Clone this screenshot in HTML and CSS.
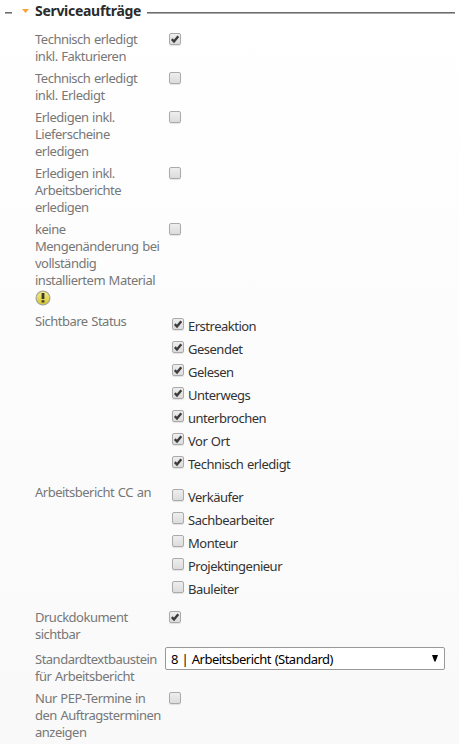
FILE: index.html
```html
<!DOCTYPE html>
<html lang="de">
<head>
<meta charset="utf-8">
<title>Serviceaufträge</title>
<link rel="stylesheet" href="styles.css">
</head>
<body>
<svg class="defs" width="0" height="0"><symbol id="tick" viewBox="0 0 12 12"><path d="M2.8 6.2 5 8.5 9.3 3.3" fill="none" stroke="#3c3c3c" stroke-width="2.4"/></symbol></svg>
<main>
  <header class="legend"><i class="dash"></i><i class="arrow"></i><h1>Serviceaufträge</h1><i class="rule"></i></header>
  <section class="row h2"><div class="label">Technisch erledigt<br>inkl. Fakturieren</div><span class="check"><svg><use href="#tick"/></svg></span></section>
  <section class="row h2"><div class="label">Technisch erledigt<br>inkl. Erledigt</div><span class="check"></span></section>
  <section class="row h3"><div class="label">Erledigen inkl.<br>Lieferscheine<br>erledigen</div><span class="check"></span></section>
  <section class="row h3"><div class="label">Erledigen inkl.<br>Arbeitsberichte<br>erledigen</div><span class="check"></span></section>
  <section class="row warning"><div class="label">keine<br>Mengenänderung bei<br>vollständig<br>installiertem Material<br>
    <svg class="warn" viewBox="0 0 16 16"><defs><linearGradient id="gold" x2="0" y2="1"><stop stop-color="#f3ef8c"/><stop offset="1" stop-color="#d6c52b"/></linearGradient></defs><circle cx="8" cy="8" r="6.9" fill="url(#gold)" stroke="#aaa69a" stroke-width="1.3"/><path d="M6.6 3h2.8v6H6.6zM6.6 10.2h2.8v2.3H6.6z" fill="#3b3b36"/></svg></div><span class="check"></span></section>
  <section class="row status"><div class="label">Sichtbare Status</div>
    <ul>
      <li><span class="check"><svg><use href="#tick"/></svg></span>Erstreaktion</li>
      <li><span class="check"><svg><use href="#tick"/></svg></span>Gesendet</li>
      <li><span class="check"><svg><use href="#tick"/></svg></span>Gelesen</li>
      <li><span class="check"><svg><use href="#tick"/></svg></span>Unterwegs</li>
      <li><span class="check"><svg><use href="#tick"/></svg></span>unterbrochen</li>
      <li><span class="check"><svg><use href="#tick"/></svg></span>Vor Ort</li>
      <li><span class="check"><svg><use href="#tick"/></svg></span>Technisch erledigt</li>
    </ul></section>
  <section class="row copy"><div class="label">Arbeitsbericht CC an</div>
    <ul>
      <li><span class="check"></span>Verkäufer</li>
      <li><span class="check"></span>Sachbearbeiter</li>
      <li><span class="check"></span>Monteur</li>
      <li><span class="check"></span>Projektingenieur</li>
      <li><span class="check"></span>Bauleiter</li>
    </ul></section>
  <section class="row print"><div class="label">Druckdokument<br>sichtbar</div><span class="check"><svg><use href="#tick"/></svg></span></section>
  <section class="row template"><div class="label">Standardtextbaustein<br>für Arbeitsbericht</div>
    <div class="select"><span>8 | Arbeitsbericht (Standard)</span><svg class="caret" viewBox="0 0 6 7"><path d="M0 0h6L3.6 6.5H2.4z"/></svg></div></section>
  <section class="row h3"><div class="label">Nur PEP-Termine in<br>den Auftragsterminen<br>anzeigen</div><span class="check"></span></section>
</main>
</body>
</html>
```
FILE: styles.css
```css
* { box-sizing: border-box; }
body {
  margin: 0;
  height: 744px;
  overflow: hidden;
  background: linear-gradient(#fff, #f9f9f9);
  font: 13px/17px "Noto Sans", sans-serif;
  letter-spacing: -0.5px;
  word-spacing: 0.7px;
  color: #333;
}
.defs { display: none; }
.legend { display: flex; height: 31px; padding: 0 4px 0 5px; align-items: flex-start; }
.dash, .rule { height: 2px; margin-top: 12px; background: linear-gradient(#6c6c6c 50%, #aaa 50%); }
.dash { width: 7px; }
.arrow { width: 7px; height: 4px; margin: 9px 0 0 10px; background: #f9a13a; clip-path: polygon(0 0, 100% 0, 50% 100%); }
h1 { margin: 2px 0 0 6px; width: 112px; font-size: 14px; line-height: 17px; letter-spacing: -0.3px; white-space: nowrap; color: #2b2b2b; }
.rule { flex: 1; }
.row { display: grid; grid-template-columns: 134px 1fr; padding-left: 35px; margin-bottom: 5px; align-items: start; }
.label { color: #777; white-space: nowrap; }
.h2 { height: 34px; }
.h3 { height: 51px; }
.warning { height: 87px; }
.warn { display: block; width: 16px; height: 16px; margin-top: 1px; }
.status { height: 163px; margin-bottom: 8px; }
.copy { height: 117px; margin-bottom: 8px; }
.print { height: 34px; margin-bottom: 4px; }
.template { height: 38px; grid-template-columns: 130px 280px; }
.template .label { margin-top: 4px; }
.check {
  width: 12px;
  height: 12px;
  margin-top: 2px;
  border: 1px solid #aaa;
  border-radius: 2px;
  background: linear-gradient(#eee, #dcdcdc);
  box-shadow: 0 1px 1px #0000001a;
}
.check svg { display: block; width: 12px; height: 12px; margin: -1px; }
ul { margin: 2px 0 0 3px; padding: 0; list-style: none; }
li { display: flex; height: 23px; line-height: 23px; white-space: nowrap; }
li .check { margin: 3px 4px 0 0; }
.select { display: flex; justify-content: space-between; height: 23px; border: 1px solid #999; border-radius: 2px; background: #fff; padding: 0 6px 0 5px; color: #000; line-height: 23px; }
.caret { width: 6px; height: 7px; margin-top: 7px; }
```
